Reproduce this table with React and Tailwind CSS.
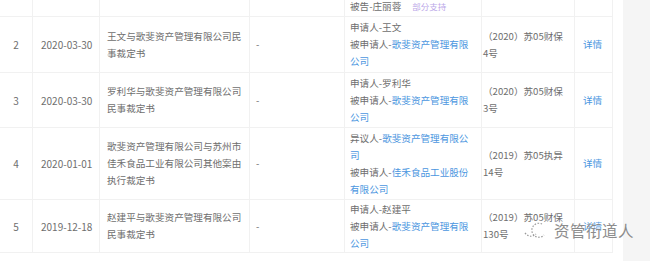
import React from 'react';

const cols = 'grid grid-cols-[33px_67px_150px_95px_137px_93px_38px]';
const cell = 'border-r border-[#f1f1f1] flex items-center';
const link = 'text-[#4b96e0]';

const rows = [
  {
    no: '2', date: '2020-03-30', h: 'h-[56px]',
    title: ['王文与歌斐资产管理有限公司民', '事裁定书'],
    parties: [
      <>申请人-王文</>,
      <>被申请人-<span className={link}>歌斐资产管理有限</span></>,
      <span className={link}>公司</span>,
    ],
    caseNo: ['（2020）苏05财保', '4号'],
  },
  {
    no: '3', date: '2020-03-30', h: 'h-[55px]',
    title: ['罗利华与歌斐资产管理有限公司', '民事裁定书'],
    parties: [
      <>申请人-罗利华</>,
      <>被申请人-<span className={link}>歌斐资产管理有限</span></>,
      <span className={link}>公司</span>,
    ],
    caseNo: ['（2020）苏05财保', '3号'],
  },
  {
    no: '4', date: '2020-01-01', h: 'h-[72px]',
    title: ['歌斐资产管理有限公司与苏州市', '佳禾食品工业有限公司其他案由', '执行裁定书'],
    parties: [
      <>异议人-<span className={link}>歌斐资产管理有限公</span></>,
      <span className={link}>司</span>,
      <>被申请人-<span className={link}>佳禾食品工业股份</span></>,
      <span className={link}>有限公司</span>,
    ],
    caseNo: ['（2019）苏05执异', '14号'],
  },
  {
    no: '5', date: '2019-12-18', h: 'h-[53px]',
    title: ['赵建平与歌斐资产管理有限公司', '民事裁定书'],
    parties: [
      <>申请人-赵建平</>,
      <>被申请人-<span className={link}>歌斐资产管理有限</span></>,
      <span className={link}>公司</span>,
    ],
    caseNo: ['（2019）苏05财保', '130号'],
  },
];

const App = () => {
  return (
    <div
      className="w-[650px] h-[261px] bg-white flex relative overflow-hidden text-[#6e6e6e] text-[9.6px] leading-[17px]"
      style={{ fontFamily: '"Noto Sans CJK SC", "Noto Sans", sans-serif' }}
    >
      <div className="w-[613px] flex flex-col">
        {/* partial first row */}
        <div className={`${cols} h-[17px] border-b border-[#f1f1f1]`}>
          <div className={cell}></div>
          <div className={cell}></div>
          <div className={cell}></div>
          <div className={cell}></div>
          <div className={`${cell} items-start pl-[5px]`}>
            <span className="leading-[12px]">被告-庄丽蓉</span>
            <span className="ml-[11px] leading-[12px] text-[8.5px] text-[#bba8e8]">部分支持</span>
          </div>
          <div className={cell}></div>
          <div className={cell}></div>
        </div>

        {rows.map((r) => (
          <div key={r.no} className={`${cols} ${r.h} border-b border-[#f1f1f1]`}>
            <div className={`${cell} justify-center text-[10px]`}>{r.no}</div>
            <div className={`${cell} pl-[8px] text-[10px]`}>{r.date}</div>
            <div className={`${cell} pl-[7px]`}>
              <div>
                {r.title.map((t, i) => <div key={i}>{t}</div>)}
              </div>
            </div>
            <div className={`${cell} pl-[6px]`}>-</div>
            <div className={`${cell} pl-[5px]`}>
              <div>
                {r.parties.map((p, i) => <div key={i} className="whitespace-nowrap">{p}</div>)}
              </div>
            </div>
            <div className={`${cell} pl-[1px]`}>
              <div>
                {r.caseNo.map((c, i) => <div key={i} className="whitespace-nowrap">{c}</div>)}
              </div>
            </div>
            <div className={`${cell} pl-[8px] ${link}`}>详情</div>
          </div>
        ))}
      </div>
      <div className="w-[10px]"></div>
      <div className="flex-1 bg-[#f5f5f5]"></div>

      {/* watermark */}
      <div className="absolute left-[522px] top-[219px] flex items-center gap-[2px] text-[#8c8c8c]">
        <svg width="30" height="22" viewBox="0 0 30 22" fill="none" stroke="#9a9a9a" strokeWidth="1.2" strokeDasharray="1.5 1.5">
          <path d="M3 14 Q8 20 14 15" />
          <path d="M20 5 A7 7 0 1 0 22 16" />
        </svg>
        <span className="text-[15.5px] leading-[20px] tracking-[0.5px]" style={{ textShadow: '0 0 2px #fff' }}>资管衔道人</span>
      </div>
    </div>
  );
};

export default App;
